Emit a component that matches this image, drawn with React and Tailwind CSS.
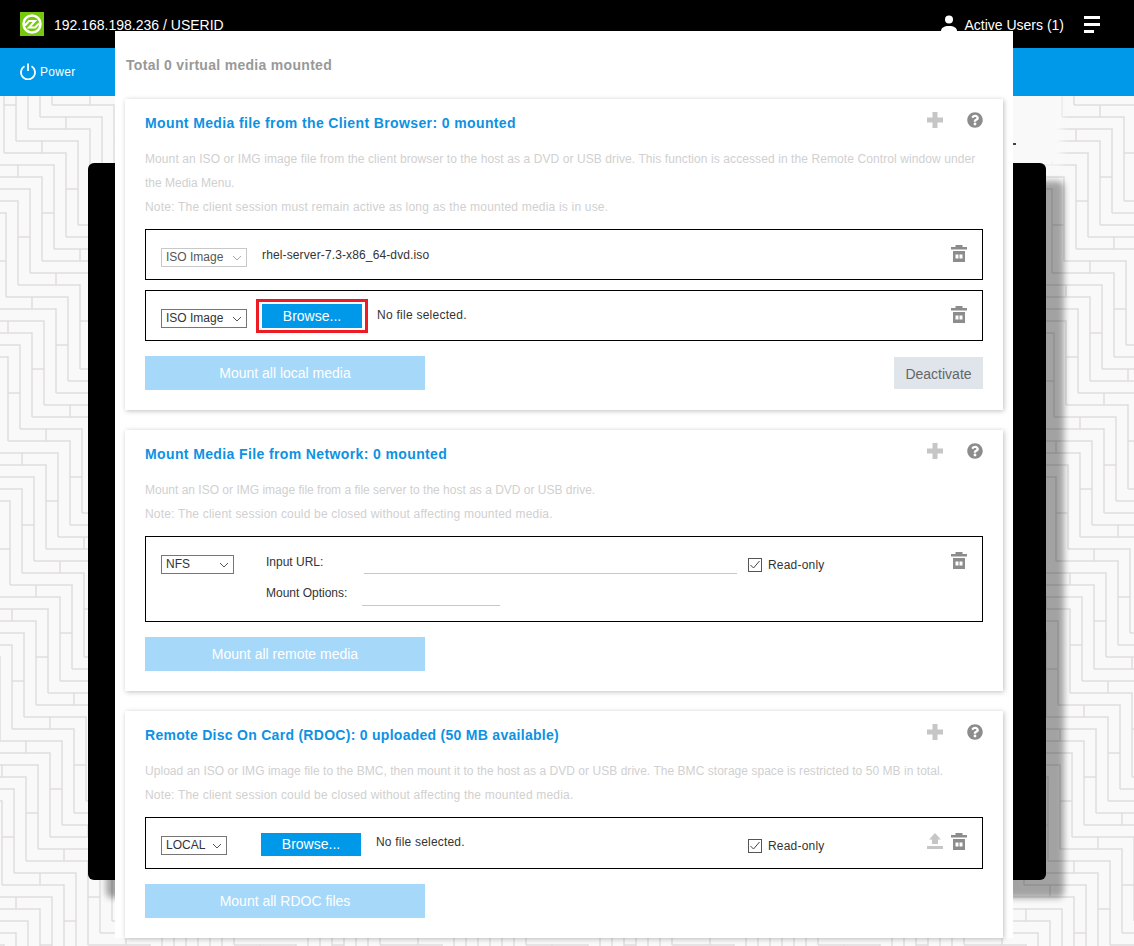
import React from "react";
import { FaQuestionCircle } from "react-icons/fa";

function herringbone() {
  let lines = "";
  let joints = "";
  for (let a = -3; a < 14; a++) {
    for (let b = -60; b < 110; b++) {
      const x = 66 + 62 * a + 12 * b;
      const y = 153 + 84 * a - 12 * b;
      if (x < -100 || x > 1300 || y < 0 || y > 1100) continue;
      lines += `M${x - 62} ${y}H${x}V${y + 84}`;
      if (b % 2 === 0) {
        joints += `M${x - 24} ${y - 12}V${y}M${x} ${y + 36}H${x + 12}`;
      }
    }
  }
  return lines + joints;
}

const BRICKS = herringbone();

function Trash() {
  return (
    <svg width="16" height="17" viewBox="0 0 16 17" className="block shrink-0">
      <path d="M4.500 0h7v2H16v2.500H0V2h4.500z" fill="#8c8c8c" />
      <path d="M2 6h12v11H2zM4.500 9.500v4h3v-4zM8.500 9.500v4h3v-4z" fill="#8c8c8c" fillRule="evenodd" />
    </svg>
  );
}

function Plus() {
  return (
    <svg width="16" height="16" viewBox="0 0 16 16" className="block">
      <path d="M5.500 0h5v5.500H16v5h-5.500V16h-5v-5.500H0v-5h5.500z" fill="#c6c6c6" />
    </svg>
  );
}

function Chevron({ color = "#555" }) {
  return (
    <svg width="10" height="6" viewBox="0 0 10 6" className="block shrink-0">
      <path d="M1 1l4 4 4-4" fill="none" stroke={color} strokeWidth="1" />
    </svg>
  );
}

function Select({ label, width, disabled }) {
  return (
    <div
      className={`flex h-[19px] items-center justify-between border pl-1 pr-[4px] text-xs ${width} ${
        disabled ? "border-[#c8c8c8] text-[#555]" : "border-[#767676] text-[#333]"
      }`}
    >
      <span className="mb-px">{label}</span>
      <Chevron color={disabled ? "#aaa" : "#555"} />
    </div>
  );
}

function Check() {
  return (
    <div className="flex h-[14px] w-[14px] items-center justify-center border border-[#555] bg-white">
      <svg width="12" height="10" viewBox="0 0 12 10" className="block">
        <path d="M1.500 5l3 3 6-7" fill="none" stroke="#444" strokeWidth="1" />
      </svg>
    </div>
  );
}

function Card({ title, titleClass, children, className = "" }) {
  return (
    <section className={`bg-white px-5 shadow-[1px_1px_5px_rgba(0,0,0,0.25)] ${className}`}>
      <div className="flex h-[48px] items-start justify-between pt-[12px]">
        <h2 className={`text-[14px] leading-[24px] font-bold text-[#0d92e3] ${titleClass}`}>{title}</h2>
        <div className="flex items-center gap-[24px] pt-[1px]">
          <Plus />
          <FaQuestionCircle className="block text-[#8c8c8c]" size={16} />
        </div>
      </div>
      {children}
    </section>
  );
}

function Desc({ lines }) {
  return (
    <div className="text-xs leading-[24px] text-[#d0d0d0]">
      {lines.map(([text, cls]) => (
        <p key={text} className={cls}>
          {text}
        </p>
      ))}
    </div>
  );
}

function MountButton({ children }) {
  return (
    <button className="block h-[34px] w-[280px] bg-[#a6d8f9] text-center text-[14px] text-white">{children}</button>
  );
}

function ReadOnly({ className }) {
  return (
    <div className={`flex items-center gap-[6px] text-xs tracking-[0.2px] text-[#333] ${className}`}>
      <Check />
      <span>Read-only</span>
    </div>
  );
}

export default function App() {
  return (
    <div className="relative h-[946px] w-full overflow-hidden bg-white font-['Liberation_Sans',Arial,sans-serif]">
      <header className="flex h-[48px] items-center justify-between bg-black pl-5 pr-[34px] text-white">
        <div className="flex items-center gap-[10px]">
          <svg width="24" height="24" viewBox="0 0 24 24" className="block">
            <rect width="24" height="24" fill="#76c80c" />
            <circle cx="12" cy="12" r="8.500" fill="none" stroke="#fff" strokeWidth="2.500" />
            <path d="M5 13.500l4-4.500h6l-6 6.500h6l4-4" fill="none" stroke="#fff" strokeWidth="2" />
          </svg>
          <span className="pt-[2px] text-[14px]">192.168.198.236 / USERID</span>
        </div>
        <div className="flex items-center">
          <svg width="16" height="20" viewBox="0 0 16 20" className="mr-2 block">
            <circle cx="8" cy="5.500" r="4" fill="#fff" />
            <path d="M0 20v-3c0-3 3-5 8-5s8 2 8 5v3z" fill="#fff" />
          </svg>
          <span className="-ml-px pt-[2px] text-[14px]">Active Users (1)</span>
          <div className="ml-[20px] flex w-[16px] flex-col gap-[4px]">
            <span className="block h-[3px] w-[16px] bg-white" />
            <span className="block h-[3px] w-[16px] bg-white" />
            <span className="block h-[3px] w-[10px] bg-white" />
          </div>
        </div>
      </header>

      <nav className="flex h-[48px] items-center gap-1 bg-[#0098e8] pl-5 text-xs tracking-[0.3px] text-white">
        <svg width="16" height="17" viewBox="0 0 16 17" className="mb-[2px] block">
          <path d="M4.500 3.300a7 7 0 1 0 7 0" fill="none" stroke="#fff" strokeWidth="1.800" />
          <path d="M8 0.500v7.500" fill="none" stroke="#fff" strokeWidth="1.800" />
        </svg>
        <span>Power</span>
      </nav>

      <main className="relative h-[850px] overflow-hidden bg-[#f9f9f9]">
        <svg width="1134" height="850" viewBox="0 96 1134 850" className="absolute inset-0 block">
          <path d={BRICKS} fill="none" stroke="#dfdddd" strokeWidth="1.500" />
        </svg>
        <div className="absolute top-[-10px] left-[1000px] h-[80px] w-[62px] bg-[#f9f9f9] blur-[4px]" />
        <div className="absolute top-[47px] left-[1013px] h-[2px] w-[3px] bg-[#444]" />
        <div className="absolute top-[67px] left-[88px] h-[717px] w-[958px] rounded-[6px] bg-black shadow-[18px_18px_6px_rgba(0,0,0,0.35)]" />
      </main>

      <div className="absolute top-[31px] left-[115px] w-[898px] bg-white px-[10px]">
        <div className="flex h-[68px] items-start pt-[25px]">
          <p className="ml-px text-[14px] leading-[18px] font-bold tracking-[0.3px] text-[#999]">Total 0 virtual media mounted</p>
        </div>

        <Card title="Mount Media file from the Client Browser: 0 mounted" titleClass="tracking-[0.38px]" className="h-[311px]">
          <Desc
            lines={[
              ["Mount an ISO or IMG image file from the client browser to the host as a DVD or USB drive. This function is accessed in the Remote Control window under", "tracking-[0.09px]"],
              ["the Media Menu.", ""],
              ["Note: The client session must remain active as long as the mounted media is in use.", "tracking-[0.2px]"],
            ]}
          />
          <div className="mt-[10px] flex h-[51px] items-start border border-black pl-[15px] pr-[15px]">
            <div className="mt-[18px]">
              <Select label="ISO Image" width="w-[86px]" disabled />
            </div>
            <span className="mt-[17px] ml-[15px] text-xs leading-[17px] tracking-[0.13px] text-[#333]">rhel-server-7.3-x86_64-dvd.iso</span>
            <div className="mt-[15px] ml-auto">
              <Trash />
            </div>
          </div>
          <div className="mt-[10px] flex h-[51px] items-start border border-black pl-[15px] pr-[15px]">
            <div className="mt-[18px]">
              <Select label="ISO Image" width="w-[86px]" />
            </div>
            <div className="mt-[8px] ml-[9px] border-[3px] border-[#ed1c24] px-[3px] py-[2px]">
              <button className="block h-[24px] w-[100px] bg-[#0098e8] text-center text-[14px] text-white">Browse...</button>
            </div>
            <span className="mt-[16px] ml-[9px] text-xs leading-[17px] tracking-[0.26px] text-[#333]">No file selected.</span>
            <div className="mt-[15px] ml-auto">
              <Trash />
            </div>
          </div>
          <div className="mt-[15px] flex items-start justify-between">
            <MountButton>Mount all local media</MountButton>
            <button className="mt-px h-[32px] w-[89px] bg-[#e0e5ec] pt-[2px] text-center text-[14px] text-[#666]">Deactivate</button>
          </div>
        </Card>

        <Card title="Mount Media File from Network: 0 mounted" titleClass="tracking-[0.38px]" className="mt-5 h-[261px]">
          <Desc
            lines={[
              ["Mount an ISO or IMG image file from a file server to the host as a DVD or USB drive.", ""],
              ["Note: The client session could be closed without affecting mounted media.", "tracking-[0.19px]"],
            ]}
          />
          <div className="mt-[10px] flex h-[86px] items-start border border-black pl-[15px] pr-[15px]">
            <div className="mt-[18px]">
              <Select label="NFS" width="w-[73px]" />
            </div>
            <div className="ml-[32px] text-xs text-[#333]">
              <div className="flex h-[37px] w-[472px] items-start">
                <span className="mt-[17px] w-[98px] leading-[17px]">Input URL:</span>
                <span className="mt-[36px] block h-px w-[373px] bg-[#c8c8c8]" />
              </div>
              <div className="flex items-start">
                <span className="mt-[11px] w-[96px] leading-[17px]">Mount Options:</span>
                <span className="mt-[31px] block h-px w-[138px] bg-[#c8c8c8]" />
              </div>
            </div>
            <ReadOnly className="mt-[20px] ml-[10px]" />
            <div className="mt-[15px] ml-auto">
              <Trash />
            </div>
          </div>
          <div className="mt-[15px]">
            <MountButton>Mount all remote media</MountButton>
          </div>
        </Card>

        <Card title="Remote Disc On Card (RDOC): 0 uploaded (50 MB available)" titleClass="tracking-[0.28px]" className="mt-5 h-[227px]">
          <Desc
            lines={[
              ["Upload an ISO or IMG image file to the BMC, then mount it to the host as a DVD or USB drive. The BMC storage space is restricted to 50 MB in total.", "tracking-[0.04px]"],
              ["Note: The client session could be closed without affecting the mounted media.", "tracking-[0.19px]"],
            ]}
          />
          <div className="mt-[10px] flex h-[52px] items-start border border-black pl-[15px] pr-[15px]">
            <div className="mt-[18px]">
              <Select label="LOCAL" width="w-[66px]" />
            </div>
            <button className="mt-[15px] ml-[34px] block h-[23px] w-[100px] bg-[#0098e8] text-center text-[14px] text-white">Browse...</button>
            <span className="mt-[16px] ml-[15px] w-[88px] text-xs leading-[17px] tracking-[0.2px] whitespace-nowrap text-[#333]">No file selected.</span>
            <ReadOnly className="mt-[20px] ml-[284px]" />
            <div className="mt-[15px] ml-auto flex items-start gap-[8px]">
              <svg width="16" height="16" viewBox="0 0 16 16" className="block">
                <path d="M8 0l6 6.500h-3V11H5V6.500H2zM0 13h16v3H0z" fill="#c6c6c6" />
              </svg>
              <Trash />
            </div>
          </div>
          <div className="mt-[15px]">
            <MountButton>Mount all RDOC files</MountButton>
          </div>
        </Card>
      </div>
    </div>
  );
}
